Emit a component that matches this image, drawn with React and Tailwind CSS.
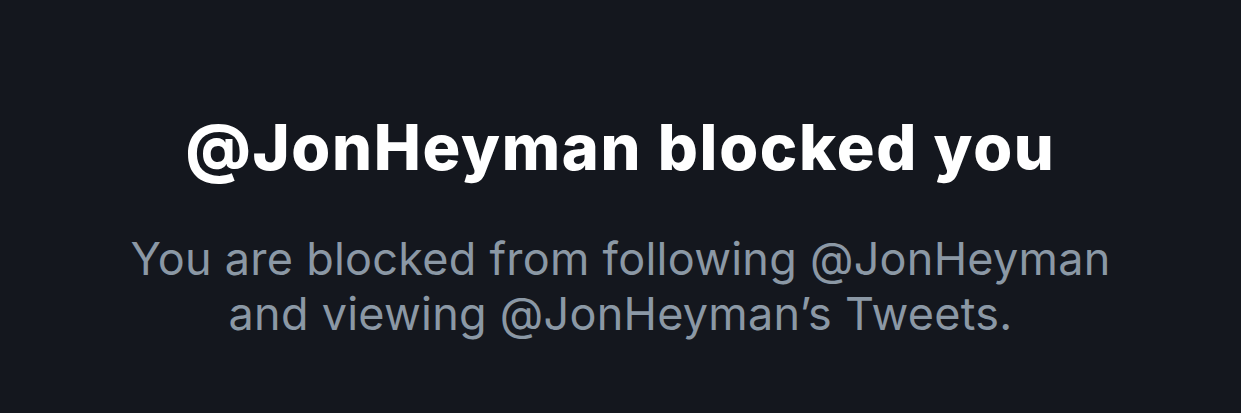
export default function App() {
  return (
    <div className="w-[1241px] h-[413px] bg-[#14171e] flex flex-col items-center pt-[116px]" style={{ fontFamily: "Inter, 'Noto Sans', sans-serif" }}>
      <h1 className="text-[63px] leading-[63px] font-extrabold text-white tracking-[1.7px] whitespace-nowrap">@JonHeyman blocked you</h1>
      <p className="mt-[52px] text-[45px] leading-[55px] text-[#8b98a5] text-center tracking-[0.25px] whitespace-nowrap">
        You are blocked from following @JonHeyman
        <br />
        and viewing @JonHeyman’s Tweets.
      </p>
    </div>
  );
}
